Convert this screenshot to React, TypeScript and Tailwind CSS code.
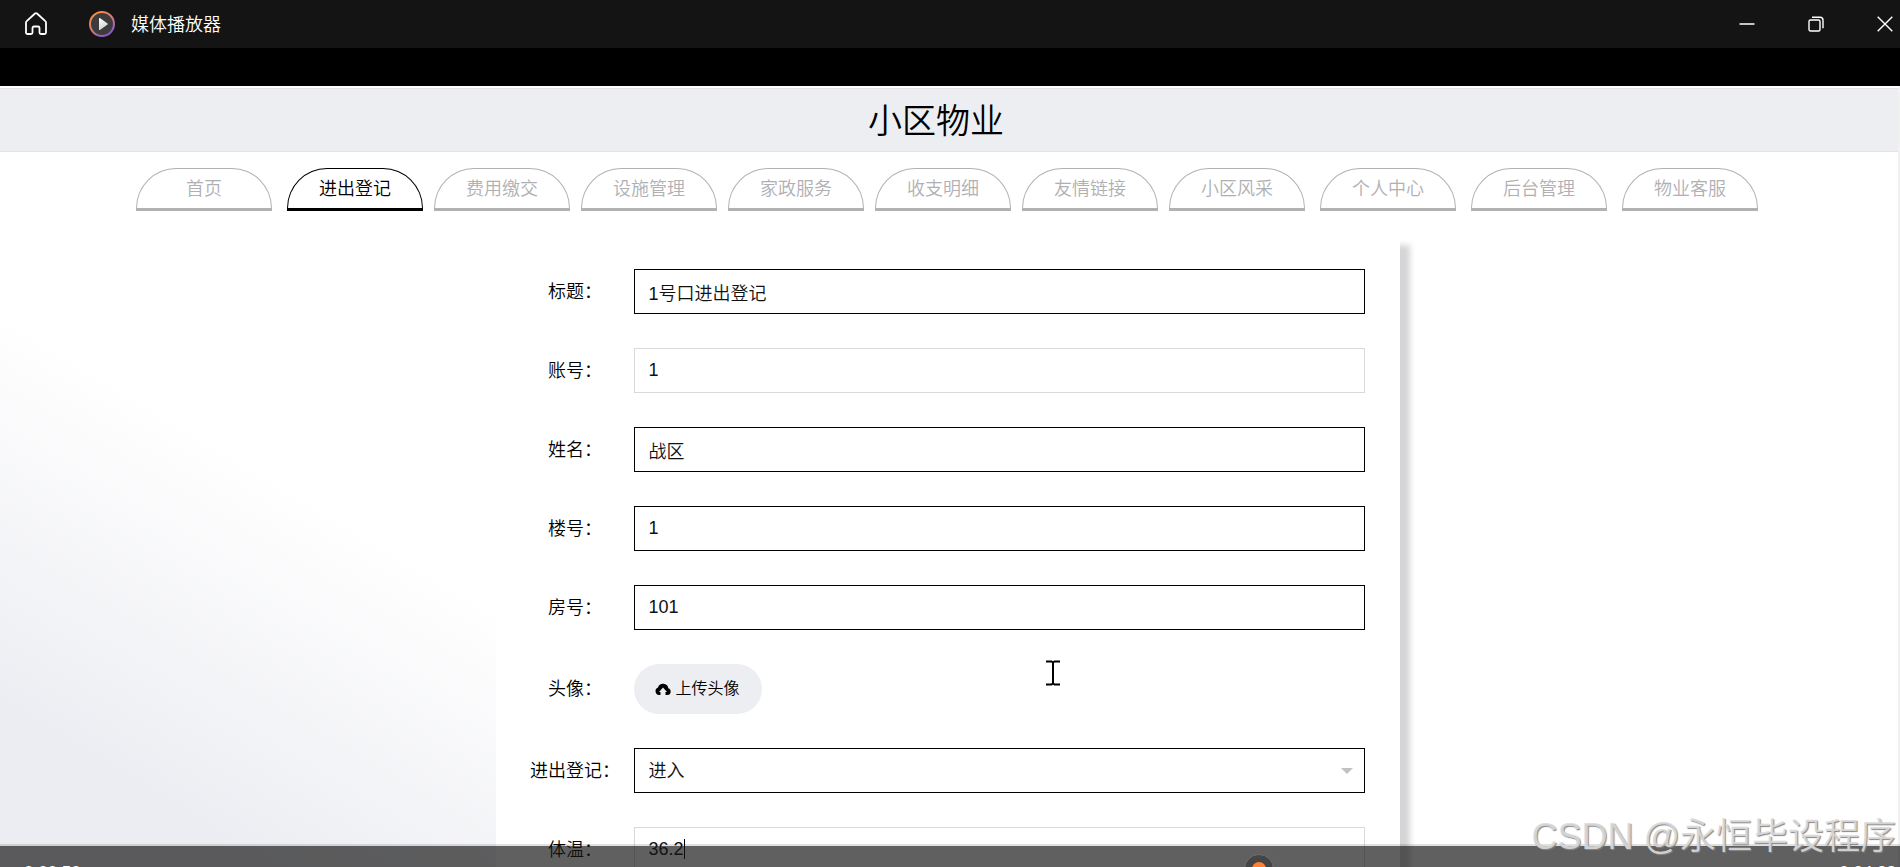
import { useState } from 'react';

const FONT = "font-['Liberation_Sans','Noto_Sans_CJK_SC_DemiLight','Noto_Sans_CJK_SC',sans-serif]";

const tabGroups = [
  ['首页'],
  ['进出登记', '费用缴交', '设施管理', '家政服务', '收支明细', '友情链接', '小区风采'],
  ['个人中心'],
  ['后台管理'],
  ['物业客服'],
];

const inputBase = 'block h-[45px] w-full border bg-white px-3.5 text-lg text-[#111] outline-none';

function TitleBar() {
  return (
    <header className="flex h-12 items-center bg-[#141414] text-white">
      <button aria-label="主页" className="ml-6 flex size-6 items-center justify-center">
        <svg viewBox="0 0 24 24" className="size-6" fill="none" stroke="currentColor" strokeWidth="1.8" strokeLinejoin="round">
          <path d="M2 10.6c0-.6.2-1.1.7-1.5L11 1.5c.6-.5 1.4-.5 2 0l8.3 7.6c.5.4.7.9.7 1.5V20.5c0 .8-.7 1.5-1.5 1.5H17c-.8 0-1.5-.7-1.5-1.5V16c0-.8-.7-1.5-1.5-1.5h-4c-.8 0-1.5.7-1.5 1.5v4.5c0 .8-.7 1.5-1.5 1.5H3.5C2.7 22 2 21.3 2 20.5z" />
        </svg>
      </button>
      <svg viewBox="0 0 26 26" className="ml-[41px] size-[26px]" fill="none">
        <defs>
          <linearGradient id="ring" x1="5" y1="2" x2="19" y2="25" gradientUnits="userSpaceOnUse">
            <stop stopColor="#ff8c3a" />
            <stop offset=".5" stopColor="#d07a84" />
            <stop offset="1" stopColor="#8256cf" />
          </linearGradient>
          <linearGradient id="tri" x1="10" y1="7" x2="17" y2="19" gradientUnits="userSpaceOnUse">
            <stop stopColor="#fff" />
            <stop offset="1" stopColor="#ccc" />
          </linearGradient>
        </defs>
        <circle cx="13" cy="13" r="12" fill="#3c3c3c" stroke="url(#ring)" strokeWidth="2" />
        <path d="M10 7.6v10.8c0 .5.5.8.9.5l7.7-5.3c.4-.3.4-.9 0-1.2L10.9 7.1c-.4-.3-.9 0-.9.5z" fill="url(#tri)" />
      </svg>
      <span className="ml-4 pt-0.5 text-lg">媒体播放器</span>
      <div className="ml-auto flex items-center gap-[53px] pr-[7px]">
        <button aria-label="最小化">
          <svg viewBox="0 0 16 16" className="size-4" stroke="currentColor" strokeWidth="1.5">
            <path d="M.5 8h15" />
          </svg>
        </button>
        <button aria-label="还原">
          <svg viewBox="0 0 16 16" className="size-4" fill="none" stroke="currentColor" strokeWidth="1.4">
            <rect x="1" y="4" width="11" height="11" rx="1.5" />
            <path d="M4 1.2h8c1.7 0 3 1.3 3 3v8" />
          </svg>
        </button>
        <button aria-label="关闭">
          <svg viewBox="0 0 16 16" className="size-4" stroke="currentColor" strokeWidth="1.4">
            <path d="M.7.7l14.6 14.6M15.3.7L.7 15.3" />
          </svg>
        </button>
      </div>
    </header>
  );
}

function Row({ id, label, children }: { id: string; label: string; children: React.ReactNode }) {
  return (
    <div className="flex items-center">
      <label htmlFor={id} className="w-[115px] shrink-0 pr-0.5 text-center text-lg">{label}：</label>
      <div className="relative flex-1">{children}</div>
    </div>
  );
}

export default function App() {
  const [active, setActive] = useState('进出登记');
  const [form, setForm] = useState({
    title: '1号口进出登记',
    account: '1',
    name: '战区',
    building: '1',
    room: '101',
    type: '进入',
    temp: '36.2',
  });

  const bind = (key: keyof typeof form) => ({
    id: key,
    value: form[key],
    onChange: (e: React.ChangeEvent<HTMLInputElement | HTMLSelectElement>) =>
      setForm({ ...form, [key]: e.target.value }),
  });

  return (
    <div className={`relative flex h-screen flex-col overflow-hidden bg-black font-[350] text-black ${FONT}`}>
      <TitleBar />

      {/* Video frame */}
      <div className="mt-[38px] min-h-0 flex-1 overflow-hidden border-t-2 border-r-2 border-t-white border-r-[#f1f1f1] bg-[linear-gradient(31deg,#ecedf2_8%,#ffffff_29%)]">
        <h1 className="flex h-16 items-center justify-center border-y border-[#e4e4e6] bg-[#edeef2] pt-0.5 pr-[26px] text-[34px]">
          小区物业
        </h1>

        <nav className="mt-4 flex justify-center gap-[15px] pr-1">
          {tabGroups.map((group) => (
            <div key={group[0]} className="flex gap-[11px]">
              {group.map((tab) => (
                <a
                  key={tab}
                  href="#"
                  onClick={() => setActive(tab)}
                  className={`block h-[43px] w-[136px] rounded-t-[40px] border border-b-[3px] text-center text-lg leading-10 ${
                    active === tab ? 'border-black text-black' : 'border-[#b2b2b2] text-[#b0b0b4]'
                  }`}
                >
                  {tab}
                </a>
              ))}
            </div>
          ))}
        </nav>

        <div className="pr-[3px]">
          <form className="mx-auto mt-6 flex w-[904px] flex-col gap-[34px] bg-white pt-[34px] pr-[35px] pb-10 pl-[23px] shadow-[12px_8px_6px_-2px_#d5d5d7]">
            <Row id="title" label="标题"><input {...bind('title')} className={`${inputBase} border-black`} /></Row>
            <Row id="account" label="账号"><input {...bind('account')} readOnly className={`${inputBase} border-[#d9d9d9]`} /></Row>
            <Row id="name" label="姓名"><input {...bind('name')} className={`${inputBase} border-black`} /></Row>
            <Row id="building" label="楼号"><input {...bind('building')} className={`${inputBase} border-black`} /></Row>
            <Row id="room" label="房号"><input {...bind('room')} className={`${inputBase} border-black`} /></Row>
            <Row id="avatar" label="头像">
              <button id="avatar" type="button" className="flex h-[50px] w-[128px] items-center justify-center gap-1 rounded-full bg-[#edeef2] text-base">
                <svg viewBox="0 0 16 12" className="h-3 w-4">
                  <path d="M13.3 5.2A5.3 5.3 0 0 0 3 4.5 3.9 3.9 0 0 0 4 12h1.5V9H4l4-4.500L12 9h-1.500v3h2a3.500 3.500 0 0 0 .8-6.800z" />
                </svg>
                上传头像
              </button>
            </Row>
            <Row id="type" label="进出登记">
              <select {...bind('type')} className={`${inputBase} appearance-none border-black`}>
                <option>进入</option>
                <option>离开</option>
              </select>
              <span className="pointer-events-none absolute top-5 right-3 border-x-6 border-t-6 border-x-transparent border-t-[#c2c2c2]" />
            </Row>
            <Row id="temp" label="体温">
              <input {...bind('temp')} className={`${inputBase} border-[#d9d9d9]`} />
              <span className="absolute top-3 left-[50px] h-5 w-px bg-black" />
            </Row>
          </form>
        </div>
      </div>

      {/* Mouse cursor */}
      <svg viewBox="0 0 16 26" className="absolute top-[660px] left-[1045px] h-[26px] w-4" fill="none" stroke="#000" strokeWidth="2">
        <path d="M1 1.5h5.5L8 2.5l1.5-1H15M8 2.5v21M1 24.5h5.5L8 23.5l1.5 1H15" />
      </svg>

      {/* Player controls */}
      <div className="absolute inset-x-0 bottom-0 h-[23px] overflow-hidden border-t-2 border-black/12 bg-[rgb(20_20_20/0.68)] bg-clip-padding text-[17px] text-white">
        <div className="flex justify-between pt-3.5 pr-1 pl-6">
          <span>0:00:50</span>
          <span>0:04:28</span>
        </div>
        <span className="absolute top-2 left-[1244px] flex size-[30px] items-center justify-center rounded-full border border-[#6e6e6e] bg-[#454545]">
          <span className="size-3.5 rounded-full bg-[#ff8030]" />
        </span>
      </div>

      <p className="absolute right-1 bottom-3 text-4xl leading-none text-[#dcdcdc]/90 [text-shadow:1px_1px_1px_#888]">
        CSDN @永恒毕设程序
      </p>
    </div>
  );
}
